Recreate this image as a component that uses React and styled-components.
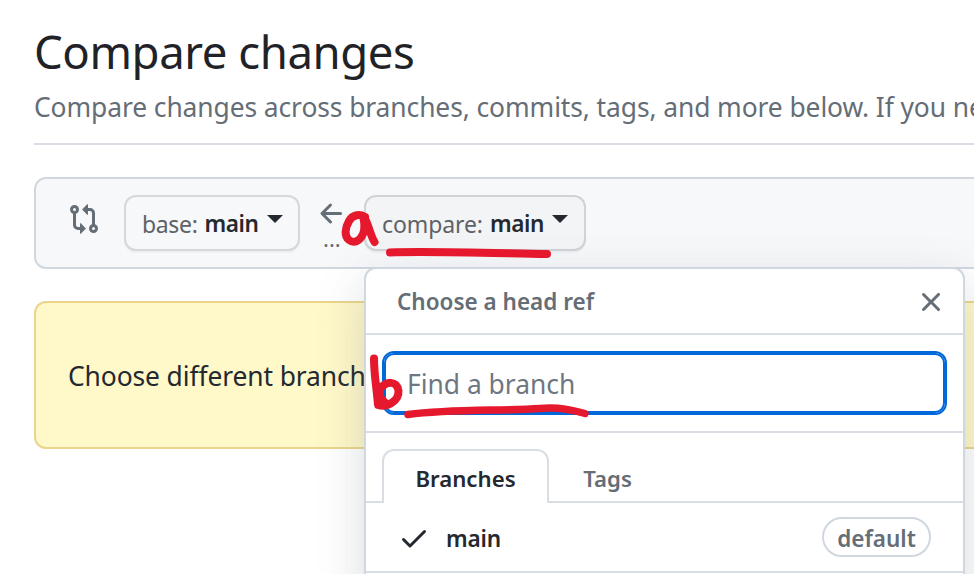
import React from 'react';
import styled, { createGlobalStyle } from 'styled-components';

const GlobalStyle = createGlobalStyle`
  * { box-sizing: border-box; }
  html, body { margin: 0; height: 574px; overflow: hidden; background: #fff; }
  body { font-family: "Noto Sans", "Open Sans", sans-serif; color: #24292f; }
`;

const Page = styled.main`
  position: relative;
  width: 974px;
  height: 574px;
  overflow: hidden;
  padding: 23px 0 0 34px;
  background: #fff;
`;

const Title = styled.h1`
  margin: 0;
  height: 58px;
  font-size: 45.5px;
  font-weight: 400;
  line-height: 57px;
  letter-spacing: -0.42px;
  white-space: nowrap;
  color: #1f2328;
`;

const Subtitle = styled.p`
  margin: 5px 0 15px;
  height: 42px;
  font-size: 26.4px;
  line-height: 42px;
  letter-spacing: -0.085px;
  white-space: nowrap;
  color: #656d76;
`;

const Divider = styled.hr`
  width: 1200px;
  height: 2px;
  margin: 0 0 32px;
  border: 0;
  background: #d8dee4;
`;

const RangeBar = styled.section`
  display: flex;
  align-items: flex-start;
  width: 1200px;
  height: 92px;
  padding: 16px 32px;
  border: 2px solid #d0d7de;
  border-radius: 12px;
  background: #f6f8fa;
`;

const CompareIcon = styled.svg`
  flex: none;
  width: 32px;
  height: 32px;
  margin: 8px 24px 0 0;
`;

const RefButton = styled.button`
  display: flex;
  align-items: center;
  flex: none;
  width: ${(p) => p.$width}px;
  height: 56px;
  padding: 1px 16px 0;
  border: 2px solid ${(p) => (p.$open ? '#d0d3d6' : '#d5d8da')};
  border-radius: 12px;
  background: ${(p) => (p.$open ? '#f3f4f6' : '#f6f8fa')};
  box-shadow: 0 2px 0 rgba(31, 35, 40, 0.04);
  font-family: inherit;
  font-size: 23px;
  line-height: 40px;
  white-space: nowrap;
  color: #24292f;
`;

const RefKind = styled.span`
  color: #5e6267;
  margin-right: 7px;
  letter-spacing: ${(p) => p.$spacing}px;
`;

const RefName = styled.span`
  font-size: 22.6px;
  font-weight: 600;
  letter-spacing: -0.4px;
`;

const Caret = styled.span`
  margin: -9px 0 0 8px;
  border: 8px solid transparent;
  border-top-color: #24292f;
  border-bottom: 0;
`;

const Direction = styled.div`
  display: flex;
  flex-direction: column;
  align-items: flex-start;
  flex: none;
  width: 64px;
  padding: 3px 0 0 16px;
`;

const ArrowIcon = styled.svg`
  width: 32px;
  height: 32px;
`;

const Dots = styled.span`
  height: 24px;
  margin: -4px 0 0 7px;
  font-size: 22px;
  line-height: 24px;
  color: #656d76;
`;

const MenuAnchor = styled.div`
  position: relative;
  flex: none;
`;

const Menu = styled.div`
  position: absolute;
  top: 72px;
  left: 0;
  width: 601px;
  height: 600px;
  border: 2px solid #d0d7de;
  border-radius: 12px;
  background: #fff;
  box-shadow: 0 16px 48px rgba(100, 109, 119, 0.24);
`;

const MenuHeader = styled.header`
  display: flex;
  align-items: center;
  justify-content: space-between;
  height: 66px;
  padding: 1px 16px 0 31px;
  border-bottom: 2px solid #d8dee4;
  font-size: 22.5px;
  font-weight: 600;
  color: #656d76;
  white-space: nowrap;
`;

const CloseIcon = styled.svg`
  width: 32px;
  height: 32px;
`;

const Filter = styled.div`
  height: 98px;
  padding: 16px;
  border-bottom: 2px solid #d8dee4;
`;

const FilterInput = styled.input`
  display: block;
  width: 565px;
  height: 64px;
  padding: 2px 24px 0 23px;
  border: 2px solid #0068d9;
  border-radius: 12px;
  outline: 0;
  background: #fff;
  box-shadow: inset 0 0 0 2px #0068d9;
  font-family: inherit;
  font-size: 26.4px;
  color: #24292f;
  &::placeholder { color: #6e7781; opacity: 1; }
`;

const Tabs = styled.div`
  display: flex;
  height: 70px;
  padding: 16px 16px 0;
  border-bottom: 2px solid #d8dee4;
`;

const Tab = styled.button`
  width: ${(p) => p.$width}px;
  height: 54px;
  padding: 2px 0 0;
  border: 2px solid ${(p) => (p.$selected ? '#d8dee4' : 'transparent')};
  border-bottom: 0;
  border-radius: 12px 12px 0 0;
  background: ${(p) => (p.$selected ? '#fff' : 'transparent')};
  font-family: inherit;
  font-size: 22.2px;
  font-weight: 600;
  color: ${(p) => (p.$selected ? '#24292f' : '#656d76')};
`;

const BranchRow = styled.div`
  display: flex;
  align-items: center;
  height: 70px;
  padding: 2px 32px 0;
  border-bottom: 2px solid #d8dee4;
  font-size: 22.6px;
  font-weight: 600;
  letter-spacing: -0.2px;
`;

const CheckIcon = styled.svg`
  width: 32px;
  height: 32px;
  margin-right: 16px;
`;

const Badge = styled.span`
  width: 109px;
  height: 40px;
  margin: 0 0 2px auto;
  border: 2px solid #d0d7de;
  border-radius: 20px;
  font-size: 22.5px;
  line-height: 39px;
  text-align: center;
  letter-spacing: 0;
  color: #656d76;
`;

const Warning = styled.section`
  width: 1200px;
  height: 148px;
  margin-top: 32px;
  padding: 50px 32px;
  border: 2px solid #ead58a;
  border-radius: 12px;
  background: #fff8c9;
  font-size: 26.4px;
  line-height: 46px;
  letter-spacing: -0.1px;
  white-space: nowrap;
`;

const Annotations = styled.svg`
  position: absolute;
  inset: 0;
  width: 974px;
  height: 574px;
  pointer-events: none;
`;

export default function App() {
  return (
    <Page>
      <GlobalStyle />
      <Title>Compare changes</Title>
      <Subtitle>Compare changes across branches, commits, tags, and more below. If you need</Subtitle>
      <Divider />
      <RangeBar>
        <CompareIcon viewBox="0 0 16 16" fill="none" stroke="#656d76" strokeWidth="1.5">
          <circle cx="3.25" cy="3.25" r="1.5" />
          <circle cx="12.75" cy="12.75" r="1.5" />
          <path d="M3.25 5v6A1.75 1.75 0 0 0 5 12.75h1.5M12.75 11V5A1.75 1.75 0 0 0 11 3.25H9.5" />
          <path
            d="M10 .854v4.792a.25.25 0 0 1-.427.177L7.177 3.427a.25.25 0 0 1 0-.354L9.573.677A.25.25 0 0 1 10 .854ZM6 15.146v-4.792a.25.25 0 0 1 .427-.177l2.396 2.396a.25.25 0 0 1 0 .354l-2.396 2.396A.25.25 0 0 1 6 15.146Z"
            fill="#656d76"
            stroke="none"
          />
        </CompareIcon>
        <RefButton $width={176}>
          <RefKind $spacing={-0.35}>base:</RefKind>
          <RefName>main</RefName>
          <Caret />
        </RefButton>
        <Direction>
          <ArrowIcon viewBox="0 0 16 16" fill="#656d76">
            <path d="M7.78 12.53a.75.75 0 0 1-1.06 0L2.47 8.28a.75.75 0 0 1 0-1.06l4.25-4.25a.75.75 0 0 1 1.06 1.06L4.81 7h7.44a.75.75 0 0 1 0 1.5H4.81l2.97 2.97a.75.75 0 0 1 0 1.06Z" />
          </ArrowIcon>
          <Dots>...</Dots>
        </Direction>
        <MenuAnchor>
          <RefButton $width={222} $open>
            <RefKind $spacing={-0.1}>compare:</RefKind>
            <RefName>main</RefName>
            <Caret />
          </RefButton>
          <Menu>
            <MenuHeader>
              Choose a head ref
              <CloseIcon viewBox="0 0 16 16" fill="#656d76">
                <path d="M3.72 3.72a.75.75 0 0 1 1.06 0L8 6.94l3.22-3.22a.75.75 0 1 1 1.06 1.06L9.06 8l3.22 3.22a.75.75 0 1 1-1.06 1.06L8 9.06l-3.22 3.22a.75.75 0 0 1-1.06-1.06L6.94 8 3.72 4.78a.75.75 0 0 1 0-1.06Z" />
              </CloseIcon>
            </MenuHeader>
            <Filter>
              <FilterInput placeholder="Find a branch" />
            </Filter>
            <Tabs>
              <Tab $width={167} $selected>Branches</Tab>
              <Tab $width={117}>Tags</Tab>
            </Tabs>
            <BranchRow>
              <CheckIcon viewBox="0 0 16 16" fill="#24292f">
                <path d="M13.78 4.22a.75.75 0 0 1 0 1.06l-7.25 7.25a.75.75 0 0 1-1.06 0L2.22 9.28a.75.75 0 0 1 1.06-1.06L6 10.94l6.72-6.72a.75.75 0 0 1 1.06 0Z" />
              </CheckIcon>
              main
              <Badge>default</Badge>
            </BranchRow>
          </Menu>
        </MenuAnchor>
      </RangeBar>
      <Warning>Choose different branch</Warning>
      <Annotations viewBox="0 0 974 574" fill="none" stroke="#e5182d" strokeLinecap="round" strokeLinejoin="round">
        <path strokeWidth="8" d="M365 217C360 214 353 214 349 221C345 228 344 236 349 240C354 244 360 241 363 234C366 227 364 221 363 216C368 220 369 233 374.500 242" />
        <path strokeWidth="8" d="M390 252.500C425 251 490 253 547 254" />
        <path strokeWidth="8" d="M374 358.500C374 375 377 390 378 405C388 408 399 400 398.500 391C397 380 386 381 380 389L380 403" />
        <path strokeWidth="3" fill="#e5182d" d="M378 390L384 398L390 404L379 407Z" />
        <path strokeWidth="7.500" d="M408 414.500C450 409 500 411 540 408.500C560 407 572 410 585 413.500" />
      </Annotations>
    </Page>
  );
}
